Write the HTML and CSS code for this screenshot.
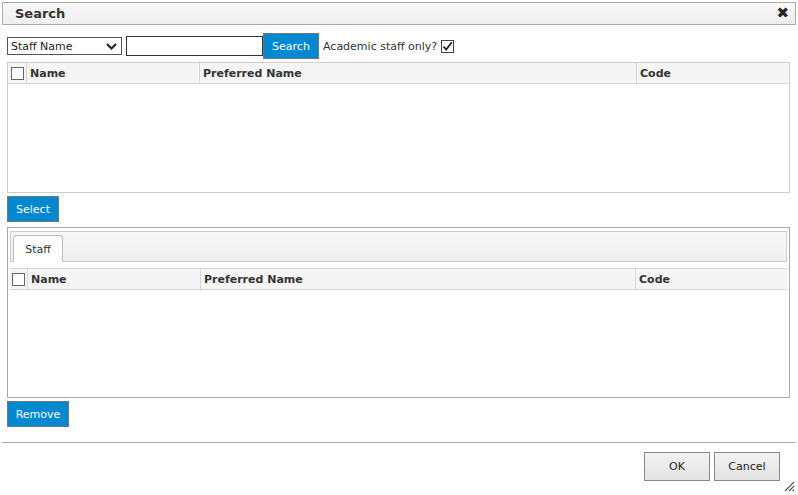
FILE: index.html
```html
<!DOCTYPE html>
<html>
<head>
<meta charset="utf-8">
<link rel="stylesheet" href="styles.css">
</head>
<body>
<div class="dialog">
  <div class="titlebar">
    <span class="title">Search</span>
    <span class="close">&#x2716;</span>
  </div>
  <div class="content">
    <div class="toolbar">
      <div class="select"><span>Staff Name</span>
        <svg class="chev" width="11" height="7" viewBox="0 0 11 7"><path d="M1 1 L5.5 5.5 L10 1" fill="none" stroke="#222" stroke-width="2"/></svg>
      </div>
      <div class="input"></div>
      <div class="btn blue search">Search</div>
      <span class="label">Academic staff only?</span>
      <span class="cb checked"><svg width="11" height="11" viewBox="0 0 11 11"><path d="M1.5 5.5 L4.2 8.5 L9.8 1.2" fill="none" stroke="#222" stroke-width="1.8"/></svg></span>
    </div>
    <div class="grid g1">
      <div class="ghead">
        <div class="c0"><span class="cb"></span></div>
        <div class="c">Name</div>
        <div class="c">Preferred Name</div>
        <div class="c last">Code</div>
      </div>
    </div>
    <div class="btnrow"><div class="btn blue sel">Select</div></div>
    <div class="panel">
      <div class="tabstrip"><div class="tab">Staff</div></div>
      <div class="ghead g2">
        <div class="c0"><span class="cb"></span></div>
        <div class="c">Name</div>
        <div class="c">Preferred Name</div>
        <div class="c last">Code</div>
      </div>
    </div>
    <div class="btnrow2"><div class="btn blue rem">Remove</div></div>
  </div>
  <div class="divider"></div>
  <div class="footer">
    <div class="btn gray">OK</div>
    <div class="btn gray">Cancel</div>
  </div>
  <svg class="grip" width="12" height="12" viewBox="0 0 12 12"><path d="M11 2 L2 11 M11 6 L6 11 M11 9.5 L9.5 11" stroke="#555" stroke-width="1.1" fill="none"/></svg>
</div>
</body>
</html>
```
FILE: styles.css
```css
html, body { margin: 0; padding: 0; background: #fff; }
body {
  font-family: "DejaVu Sans", Verdana, sans-serif;
  font-size: 11px;
  color: #333;
  width: 798px;
  height: 495px;
  overflow: hidden;
}
.dialog { position: relative; width: 798px; height: 495px; padding-top: 2px; box-sizing: border-box; }
.titlebar {
  margin: 0 2px;
  height: 21px;
  border: 1px solid #aaa;
  background: linear-gradient(#f8f8f8, #eeeeee);
  display: flex;
  align-items: center;
  justify-content: space-between;
  padding: 0 6px 0 12px;
}
.title { font-weight: bold; font-size: 13px; color: #333; }
.close { font-size: 15px; line-height: 15px; color: #222; }
.content { padding: 0 8px 0 7px; }
.toolbar {
  margin-top: 8px;
  height: 26px;
  display: flex;
  align-items: center;
}
.select {
  width: 115px; height: 18px; box-sizing: border-box;
  border: 1px solid #555;
  display: flex; align-items: center; justify-content: space-between;
  padding: 0 4px 0 3px;
  color: #222;
}
.input {
  margin-left: 4px;
  width: 137px; height: 20px; box-sizing: border-box;
  border: 1px solid #333;
}
.btn {
  box-sizing: border-box;
  display: flex; align-items: center; justify-content: center;
}
.blue {
  background: #0288d1;
  border: 1px solid #6f7a80;
  color: #fff;
}
.search { width: 56px; height: 26px; }
.label { margin-left: 4px; color: #333; }
.cb {
  display: inline-flex; align-items: center; justify-content: center;
  width: 13px; height: 13px; box-sizing: border-box;
  border: 1px solid #666; background: #fff;
}
.checked { margin-left: 4px; border-color: #444; }
.grid.g1 {
  margin-top: 3px;
  height: 131px; box-sizing: border-box;
  border: 1px solid #ccc;
}
.ghead {
  display: grid;
  grid-template-columns: 19px 173px 437px 1fr;
  height: 21px; box-sizing: border-box;
  background: #f5f5f5;
  border-bottom: 1px solid #d6d6d6;
  font-weight: bold; color: #333;
}
.ghead .c0 { display: flex; align-items: center; padding-left: 3px; border-right: 1px solid #d6d6d6; }
.ghead .c { display: flex; align-items: center; padding-left: 3px; border-right: 1px solid #d6d6d6; }
.ghead .c.last { border-right: none; }
.btnrow { margin-top: 3px; display: flex; }
.sel { width: 52px; height: 26px; }
.panel {
  margin-top: 5px;
  height: 171px; box-sizing: border-box;
  border: 1px solid #aaa;
  padding: 3px 2px 0 2px;
}
.tabstrip {
  height: 31px; box-sizing: border-box;
  border: 1px solid #ccc;
  background: linear-gradient(#f8f8f8, #efefef);
  display: flex; align-items: flex-end;
  padding-left: 2px;
}
.tab {
  width: 50px; height: 27px; box-sizing: border-box;
  border: 1px solid #bbb; border-bottom: none;
  border-radius: 4px 4px 0 0;
  background: #fff;
  display: flex; align-items: center; justify-content: center;
  margin-bottom: -1px;
  color: #333;
}
.ghead.g2 {
  margin-top: 6px;
  border-top: 1px solid #d6d6d6;
  grid-template-columns: 18px 173px 435px 1fr;
  height: 22px;
}
.ghead.g2 .c0 { padding-left: 2px; }
.btnrow2 { margin-top: 3px; display: flex; }
.rem { width: 62px; height: 26px; }
.divider { margin: 15px 2px 0; height: 0; border-top: 1px solid #aaa; }
.footer {
  margin-top: 9px;
  display: flex; justify-content: flex-end; gap: 4px;
  padding-right: 18px;
}
.gray {
  width: 66px; height: 29px;
  border: 1px solid #888;
  background: linear-gradient(#f3f3f3, #e3e3e3);
  color: #222;
  font-size: 11px;
}
.grip { position: absolute; right: 3px; bottom: 3px; }
```
